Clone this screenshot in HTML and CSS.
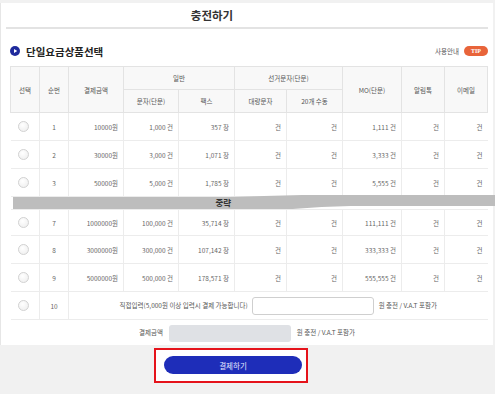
FILE: index.html
```html
<!DOCTYPE html>
<html>
<head>
    <meta charset="UTF-8">
    <meta name="viewport" content="width=device-width, initial-scale=1.0">
    <title>충전하기</title>
    <link rel="stylesheet" href="styles.css">
</head>
<body>
<div class="panel">
    <h1 class="title">충전하기</h1>

    <div class="sec-head">
        <div class="sec-title">
            <svg class="dot" width="10" height="10" viewBox="0 0 10 10">
                <circle cx="5" cy="5" r="5" fill="#1f2a9c"/>
                <path d="M4 3 L7.2 5 L4 7 Z" fill="#fff"/>
            </svg>
            단일요금상품선택
        </div>
        <div class="guide">사용안내 <span class="tip">TIP</span></div>
    </div>

    <table class="price">
        <colgroup>
            <col style="width:29px">
            <col style="width:29px">
            <col style="width:55px">
            <col style="width:55px">
            <col style="width:56px">
            <col style="width:52px">
            <col style="width:56px">
            <col style="width:59px">
            <col style="width:43px">
            <col style="width:43px">
        </colgroup>
        <thead>
        <tr>
            <th rowspan="2">선택</th>
            <th rowspan="2">순번</th>
            <th rowspan="2">결제금액</th>
            <th colspan="2">일반</th>
            <th colspan="2">선거문자(단문)</th>
            <th rowspan="2">MO(단문)</th>
            <th rowspan="2">알림톡</th>
            <th rowspan="2">이메일</th>
        </tr>
        <tr>
            <th>문자(단문)</th>
            <th>팩스</th>
            <th>대량문자</th>
            <th>20개 수동</th>
        </tr>
        </thead>
        <tbody>
        <tr>
            <td class="sel"><span class="radio"></span></td>
            <td class="no">1</td>
            <td>10000원</td>
            <td>1,000 건</td>
            <td>357 장</td>
            <td>건</td>
            <td>건</td>
            <td>1,111 건</td>
            <td>건</td>
            <td>건</td>
        </tr>
        <tr>
            <td class="sel"><span class="radio"></span></td>
            <td class="no">2</td>
            <td>30000원</td>
            <td>3,000 건</td>
            <td>1,071 장</td>
            <td>건</td>
            <td>건</td>
            <td>3,333 건</td>
            <td>건</td>
            <td>건</td>
        </tr>
        <tr>
            <td class="sel"><span class="radio"></span></td>
            <td class="no">3</td>
            <td>50000원</td>
            <td>5,000 건</td>
            <td>1,785 장</td>
            <td>건</td>
            <td>건</td>
            <td>5,555 건</td>
            <td>건</td>
            <td>건</td>
        </tr>
        <tr class="skip">
            <td colspan="10"><div class="cut">중략</div></td>
        </tr>
        <tr class="after-cut">
            <td class="sel"><span class="radio"></span></td>
            <td class="no">7</td>
            <td>1000000원</td>
            <td>100,000 건</td>
            <td>35,714 장</td>
            <td>건</td>
            <td>건</td>
            <td>111,111 건</td>
            <td>건</td>
            <td>건</td>
        </tr>
        <tr>
            <td class="sel"><span class="radio"></span></td>
            <td class="no">8</td>
            <td>3000000원</td>
            <td>300,000 건</td>
            <td>107,142 장</td>
            <td>건</td>
            <td>건</td>
            <td>333,333 건</td>
            <td>건</td>
            <td>건</td>
        </tr>
        <tr>
            <td class="sel"><span class="radio"></span></td>
            <td class="no">9</td>
            <td>5000000원</td>
            <td>500,000 건</td>
            <td>178,571 장</td>
            <td>건</td>
            <td>건</td>
            <td>555,555 건</td>
            <td>건</td>
            <td>건</td>
        </tr>
        <tr>
            <td class="sel"><span class="radio"></span></td>
            <td class="no">10</td>
            <td class="direct" colspan="8">
                직접입력(5,000원 이상 입력시 결제 가능합니다)
                <input type="text" class="direct-input">
                원 충전 / V.A.T 포함가
            </td>
        </tr>
        </tbody>
    </table>

    <div class="total">
        결제금액 <span class="total-box"></span> 원 충전 / V.A.T 포함가
    </div>
</div>

<div class="pay-wrap">
    <div class="pay-frame">
        <button type="button" class="pay-btn">결제하기</button>
    </div>
</div>
</body>
</html>
```

FILE: styles.css
```css
* {
    box-sizing: border-box;
}

body {
    margin: 0;
    background-color: #f1f1f1;
    font-family: "Noto Sans CJK KR", "Noto Sans", sans-serif;
    color: #666;
}

.panel {
    margin: 3px 2px 0 0;
    padding: 0 5px 3px;
    background-color: #fff;
    border-left: 1px solid #e6e6e6;
}

.title {
    margin: 0;
    height: 26px;
    line-height: 24px;
    padding-right: 70px;
    font-size: 11.5px;
    font-weight: bold;
    color: #333;
    text-align: center;
    border-bottom: 2px solid #e3e3e3;
}

.sec-head {
    display: flex;
    justify-content: space-between;
    align-items: center;
    height: 37px;
    padding: 14px 0 7px 4px;
}

.sec-title {
    display: flex;
    align-items: center;
    font-size: 10.5px;
    font-weight: bold;
    color: #222;
}

.dot {
    margin-right: 6px;
}

.guide {
    display: flex;
    align-items: center;
    font-size: 6.5px;
    color: #555;
}

.tip {
    display: inline-block;
    width: 24px;
    height: 10px;
    line-height: 10px;
    margin-left: 5px;
    border-radius: 5px;
    background-color: #e8643a;
    color: #fff;
    font-size: 6px;
    font-weight: bold;
    text-align: center;
    font-family: "Liberation Serif", serif;
}

.price {
    width: 477px;
    margin-left: 4px;
    table-layout: fixed;
    border-collapse: collapse;
    font-size: 6.5px;
}

.price th {
    height: 23px;
    padding: 0;
    font-weight: normal;
    color: #555;
    background-color: #f8f8f8;
    border: 1px solid #e3e3e3;
}

.price td {
    height: 28px;
    padding: 0 5px 0 0;
    text-align: right;
    color: #666;
    border: 1px solid #ececec;
}

.price td:first-child {
    border-left: none;
}

.price td:last-child {
    border-right: none;
}

.price td.sel,
.price td.no {
    padding: 0;
    text-align: center;
}

.radio {
    display: inline-block;
    width: 11px;
    height: 11px;
    margin-left: -3px;
    vertical-align: middle;
    border: 1px solid #d2d2d2;
    border-radius: 50%;
    background: radial-gradient(circle at 40% 35%, #fff, #ececec);
}

.price tr.skip td {
    height: 12px;
    padding: 0;
    border-left: none;
    border-right: none;
}

.price tr.after-cut td {
    height: 26px;
}

.cut {
    height: 14px;
    margin: -2px -8px 0 2px;
    padding-left: 203px;
    line-height: 14px;
    text-align: left;
    font-size: 8.5px;
    font-weight: bold;
    color: #333;
    background-color: #bdbdbd;
    clip-path: polygon(0 2px, 45% 2px, 52% 1px, 60% 0, 100% 0, 100% 11px, 70% 11px, 64% 12px, 58% 14px, 0 14px);
}

.price td.direct {
    padding: 0;
    text-align: center;
    color: #555;
}

.direct-input {
    width: 122px;
    height: 18px;
    margin: 0 3px;
    vertical-align: middle;
    border: 1px solid #cfcfcf;
    border-radius: 3px;
    background-color: #fff;
}

.total {
    padding-top: 5px;
    text-align: center;
    font-size: 6.5px;
    color: #555;
}

.total-box {
    display: inline-block;
    width: 122px;
    height: 17px;
    margin: 0 4px 0 5px;
    vertical-align: middle;
    border-radius: 3px;
    background-color: #dfe1e5;
}

.pay-wrap {
    padding: 3px 0 0 154px;
}

.pay-frame {
    width: 154px;
    height: 35px;
    padding: 6px 0 0 8px;
    border: 2px solid #e5131b;
    background-color: #fff;
}

.pay-btn {
    display: block;
    width: 138px;
    height: 18px;
    padding: 0;
    border: none;
    border-radius: 9px;
    background-color: #1e2db9;
    color: #e6e8ff;
    font-family: "Noto Sans CJK KR", "Noto Sans", sans-serif;
    font-size: 7.5px;
}
```
